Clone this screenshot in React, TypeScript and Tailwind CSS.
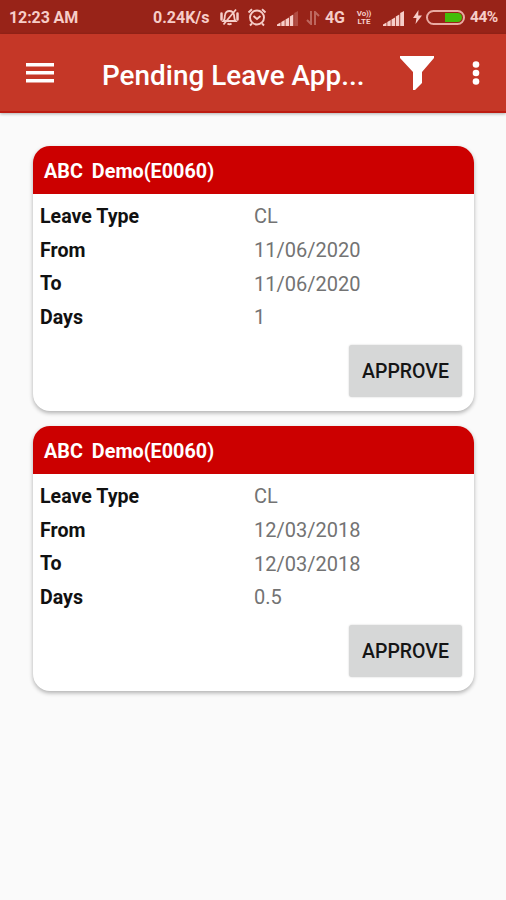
import React from "react";

const leaves = [
  { name: "ABC", id: "Demo(E0060)", type: "CL", from: "11/06/2020", to: "11/06/2020", days: "1" },
  { name: "ABC", id: "Demo(E0060)", type: "CL", from: "12/03/2018", to: "12/03/2018", days: "0.5" },
];

const MutedBell = () => (
  <svg className="mb-[2px] ml-[9px] shrink-0" width="21" height="18" viewBox="0 0 21 18" fill="none" stroke="currentColor" strokeWidth="1.8">
    <path d="M4.500 13c1.500-1.500 1-4 1.500-6C6.500 4.500 8.500 3 10.500 3s4 1.500 4.500 4c.4 2 0 4.500 1.500 6z" />
    <path d="M8.500 15.500q2 1.500 4 0M17 1.500 4.500 16.500" />
    <path d="M2.500 5.500v6M18.500 5.500v6" strokeWidth="2.500" strokeLinecap="round" />
  </svg>
);

const Alarm = () => (
  <svg className="mb-[2px] ml-[7px] shrink-0" width="20" height="19" viewBox="0 0 20 19" fill="none" stroke="currentColor" strokeWidth="1.900">
    <circle cx="10" cy="9.500" r="7" />
    <path d="m6.500 8 3.500 3 3.500-3M1.500 4.500 5 1.200M18.500 4.500 15 1.200M5 15.500l-2 2M15 15.500l2 2" />
  </svg>
);

const Signal = ({ className, weak }: { className: string; weak?: boolean }) => (
  <svg className={className} width="21" height="15" viewBox="0 0 21 15" fill="currentColor">
    <path d="M0 15v-1.500l3.500-2V15zM4.300 15v-4l3.400-2v6zM8.500 15V8.500l3.500-2V15zM12.800 15V5.500l3.500-2V15z" />
    <path d="M17.200 15V2L21 0v15z" opacity={weak ? 0.25 : 1} />
  </svg>
);

const StatusBar = () => (
  <div className="flex h-[34px] items-center bg-[#982318] pt-[2px] pl-[9px] text-[#f6cdc8]">
    <span className="w-[144px] text-[16px] font-bold tracking-[-0.1px] whitespace-nowrap">12:23 AM</span>
    <span className="w-[57px] text-[16px] font-bold whitespace-nowrap">0.24K/s</span>
    <MutedBell />
    <Alarm />
    <Signal className="ml-[10px] shrink-0" weak />
    <svg className="ml-2 shrink-0 opacity-40" width="14" height="14" viewBox="0 0 14 14" fill="none" stroke="currentColor" strokeWidth="2">
      <path d="M5 0v13L1 9M9 14V1l4 4" />
    </svg>
    <span className="ml-[5px] w-[21px] text-[16px] font-bold tracking-[-0.3px]">4G</span>
    <span className="ml-[9px] flex w-[18px] flex-col text-center text-[8px] leading-[8px] font-bold">
      <span className="h-2 tracking-[-0.2px]">Vo))</span>
      <span className="h-2">LTE</span>
    </span>
    <Signal className="ml-[10px] shrink-0" />
    <svg className="mb-[2px] ml-[9px] shrink-0" width="9" height="14" viewBox="0 0 9 14" fill="currentColor">
      <path d="M5.500 0 0 8h3.500L2.500 14 9 5.500H5.200z" />
    </svg>
    <div className="mb-[2px] ml-1 flex h-[15px] w-[39px] shrink-0 justify-end rounded-full border-2 border-[#e9aaa2] p-px">
      <div className="w-[17px] rounded-r-full bg-[#44bd08]" />
    </div>
    <span className="ml-[5px] text-[15.500px] font-bold tracking-[-0.500px]">44%</span>
  </div>
);

const AppBar = () => (
  <div className="relative flex h-[79px] items-center border-b-2 border-[#bd1c12] bg-[#c53727] text-white shadow-[0_1px_3px_rgba(0,0,0,0.3)]">
    <svg className="ml-[26px]" width="28" height="20" viewBox="0 0 28 20" fill="currentColor">
      <path d="M0 0h28v3.500H0zM0 8h28v3.500H0zM0 16h28v3.500H0z" />
    </svg>
    <h1 className="ml-12 w-[264px] pt-[7px] text-[27.900px] font-medium whitespace-nowrap">Pending Leave App...</h1>
    <svg className="ml-[33px]" width="36" height="36" viewBox="0 0 36 36" fill="currentColor">
      <path d="M1 1h34v2L23 17v11l-7 7h-2V17L1 3z" />
    </svg>
    <svg className="ml-[37px]" width="8" height="26" viewBox="0 0 8 26" fill="currentColor">
      <circle cx="4" cy="4.500" r="3.300" />
      <circle cx="4" cy="13" r="3.300" />
      <circle cx="4" cy="21.500" r="3.300" />
    </svg>
  </div>
);

const Row = ({ label, value }: { label: string; value: string }) => (
  <div className="flex h-[33.700px] items-center">
    <span className="w-[214px] pt-px text-[19.600px] font-bold text-[#111]">{label}</span>
    <span className="text-[20px] text-[#737373]">{value}</span>
  </div>
);

export default function App() {
  return (
    <div className="h-[900px] w-[506px] overflow-hidden bg-[#fafafa] font-[Roboto,sans-serif]">
      <StatusBar />
      <AppBar />
      <div className="flex flex-col gap-[15px] pt-[33px] pr-8 pl-[33px]">
        {leaves.map((leave, index) => (
          <div key={index} className="h-[265px] overflow-hidden rounded-[17px] bg-white shadow-[0_2px_4px_rgba(0,0,0,0.3)]">
            <div className="flex h-12 items-center gap-[9px] bg-[#cc0000] pt-[3px] pl-[11px] text-[19.800px] font-bold text-white">
              <span>{leave.name}</span>
              <span>{leave.id}</span>
            </div>
            <div className="pt-[5.300px] pl-[7px]">
              <Row label="Leave Type" value={leave.type} />
              <Row label="From" value={leave.from} />
              <Row label="To" value={leave.to} />
              <Row label="Days" value={leave.days} />
            </div>
            <div className="flex justify-end pt-[10.700px] pr-3">
              <button className="h-[52px] w-[113px] rounded-[3px] bg-[#d6d7d7] pt-[2px] text-[19.500px] font-medium text-[#151515] shadow-[0_0_2px_rgba(0,0,0,0.2)]">
                APPROVE
              </button>
            </div>
          </div>
        ))}
      </div>
    </div>
  );
}
